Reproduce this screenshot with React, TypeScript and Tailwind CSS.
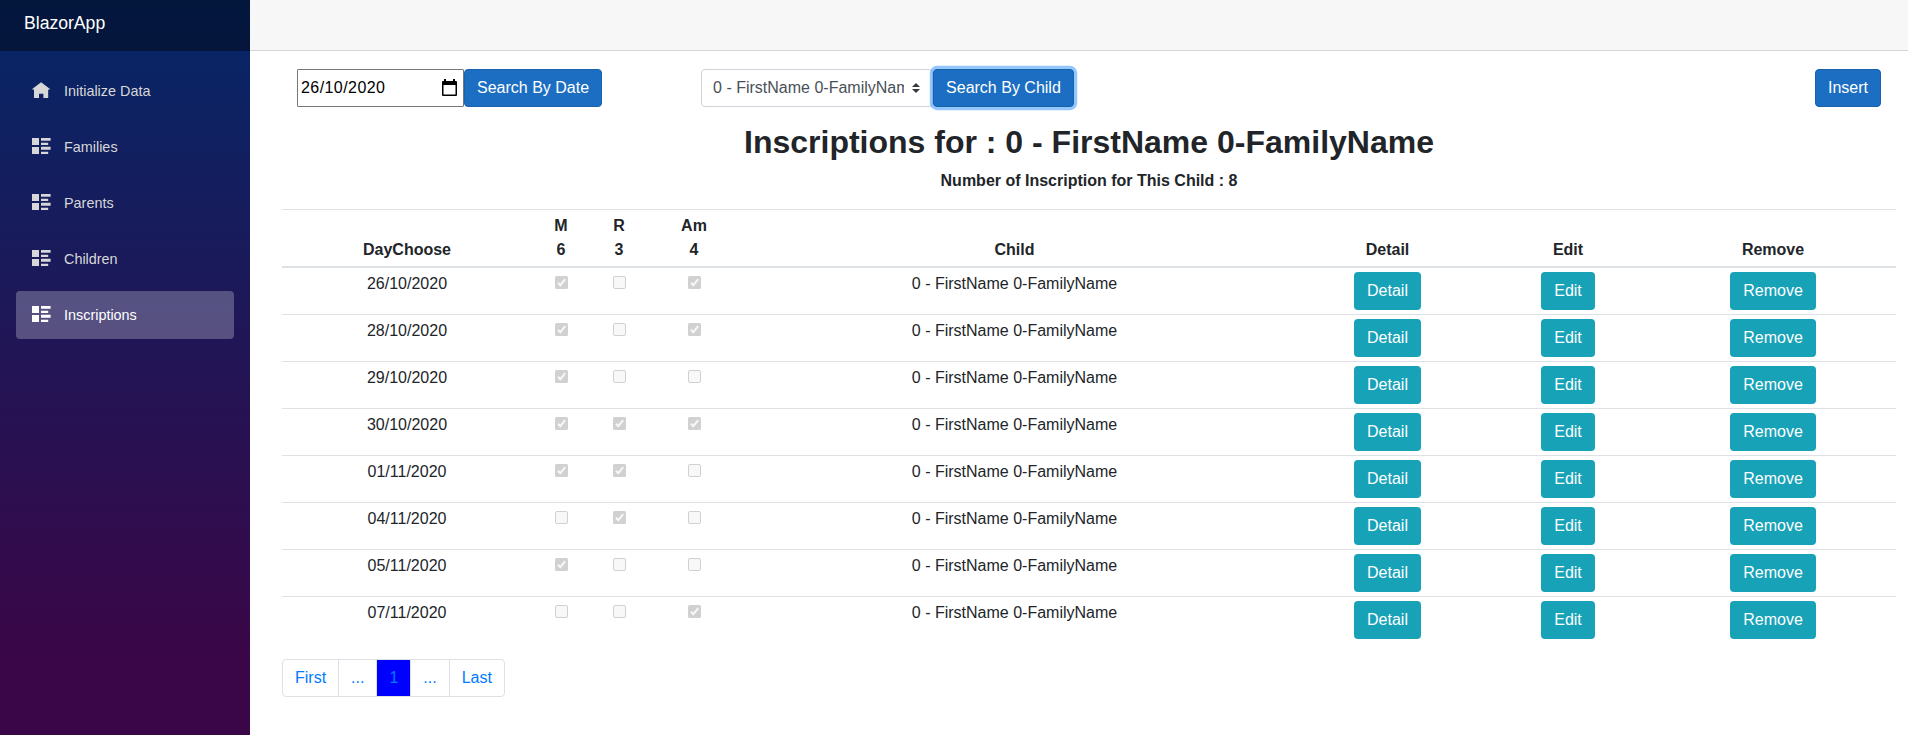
import React from 'react';

const LIST = 'M0 0h7v7H0zM9 0h9.6v2.7H9zM9 4.7h7.2V7H9zM0 9h7v7H0zM9 8.8h9.6v2.9H9zM9 13.7h7.2V16H9z';
const HOME = 'M9.1 0.2L0.2 7v0.4H2V16h5v-4.3h4.4V16h4.8V7.4H18V7z';

const navItems = [
  { label: 'Initialize Data', path: HOME, active: false },
  { label: 'Families', path: LIST, active: false },
  { label: 'Parents', path: LIST, active: false },
  { label: 'Children', path: LIST, active: false },
  { label: 'Inscriptions', path: LIST, active: true },
];

const rows: [string, boolean, boolean, boolean][] = [
  ['26/10/2020', true, false, true],
  ['28/10/2020', true, false, true],
  ['29/10/2020', true, false, false],
  ['30/10/2020', true, true, true],
  ['01/11/2020', true, true, false],
  ['04/11/2020', false, true, false],
  ['05/11/2020', true, false, false],
  ['07/11/2020', false, false, true],
];

function Sidebar() {
  return (
    <aside className="w-[250px] shrink-0 bg-[linear-gradient(180deg,rgb(5,39,103)_0px,#3a0647_656px)]">
      <div className="flex h-[51px] items-center bg-black/40 pb-[5px] pl-6">
        <a className="text-[17.6px] leading-[26px] text-white">BlazorApp</a>
      </div>
      <nav className="flex flex-col gap-2 px-4 pt-4">
        {navItems.map((item) => (
          <a
            key={item.label}
            className={
              item.active
                ? 'flex h-12 items-center rounded bg-white/25 pl-4 text-[14.4px] text-white'
                : 'flex h-12 items-center rounded pl-4 text-[14.4px] text-[#d7d7d7]'
            }
          >
            <svg viewBox="0 0 19 16" className="mr-[13px] mb-[2px] h-4 w-[19px]" fill="currentColor">
              <path d={item.path} />
            </svg>
            <span className="pt-[2px]">{item.label}</span>
          </a>
        ))}
      </nav>
    </aside>
  );
}

function Check({ on }: { on: boolean }) {
  return on ? (
    <svg viewBox="0 0 13 13" className="mx-auto mt-[8px] block size-[13px]">
      <rect width="13" height="13" rx="1.5" fill="#d1d1d1" />
      <path d="M3 6.8L5.3 9.2L10.2 3.2" fill="none" stroke="#f8f8f8" strokeWidth="2" />
    </svg>
  ) : (
    <span className="mx-auto mt-[8px] block size-[13px] rounded-[2px] border border-[#d1d1d1] bg-[#f8f8f8]" />
  );
}

function InfoButton({ children }: { children: React.ReactNode }) {
  return (
    <button className="mt-1 h-[38px] rounded bg-[#17a2b8] px-[13px] leading-6 text-white">{children}</button>
  );
}

const primary = 'h-[38px] rounded border border-[#1861ac] bg-[#1b6ec2] px-3 leading-6 whitespace-nowrap text-white';

function Toolbar() {
  return (
    <div className="flex h-[38px] pr-[27px] pl-[47px]">
      <div className="flex h-[38px] w-[167px] items-center justify-between rounded-[1px] border border-[#767676] pr-[6px] pl-[3px] text-black">
        <span className="tracking-[0.43px]">26/10/2020</span>
        <svg viewBox="0 0 15 17" className="mb-[1px] h-[17px] w-[15px]">
          <path d="M2 0h2v2h7V0h2v2h1a1 1 0 0 1 1 1v13a1 1 0 0 1-1 1H1a1 1 0 0 1-1-1V3a1 1 0 0 1 1-1h1zM1.5 6v9.5h12V6z" fill="#000" fillRule="evenodd" />
        </svg>
      </div>
      <button className={primary}>Search By Date</button>
      <div className="ml-[99px] flex h-[38px] w-[232px] items-center rounded border border-[#ced4da] pl-[11px] text-[#495057]">
        <span className="w-[191px] shrink-0 overflow-hidden whitespace-nowrap">0 - FirstName 0-FamilyName</span>
        <svg viewBox="0 0 4 5" className="ml-[8px] h-[10px] w-2 shrink-0">
          <path fill="#343a40" d="M2 0L0 2h4zm0 5L0 3h4z" />
        </svg>
      </div>
      <button className="h-[38px] rounded border border-[#1861ac] bg-[#1b6ec2] px-3 leading-6 whitespace-nowrap text-white shadow-[0_0_0_3.2px_rgba(38,143,255,0.5)]">
        Search By Child
      </button>
      <button className="ml-auto h-[38px] rounded border border-[#1861ac] bg-[#1b6ec2] px-3 leading-6 text-white">Insert</button>
    </div>
  );
}

function Inscriptions() {
  const th = 'h-[59px] border-t border-b-2 border-[#dee2e6] pb-[4px] align-bottom font-bold leading-6';
  return (
    <table className="w-[1614px] table-fixed border-separate border-spacing-0 text-center">
      <colgroup>
        <col className="w-[250px]" />
        <col className="w-[58px]" />
        <col className="w-[58px]" />
        <col className="w-[92px]" />
        <col className="w-[549px]" />
        <col className="w-[197px]" />
        <col className="w-[164px]" />
        <col className="w-[246px]" />
      </colgroup>
      <thead>
        <tr>
          <th className={th}>DayChoose</th>
          <th className={th}>M<br />6</th>
          <th className={th}>R<br />3</th>
          <th className={th}>Am<br />4</th>
          <th className={th}>Child</th>
          <th className={th}>Detail</th>
          <th className={th}>Edit</th>
          <th className={th}>Remove</th>
        </tr>
      </thead>
      <tbody className="[&_td]:h-[47px] [&_td]:border-b [&_td]:border-[#dee2e6] [&_td]:p-0 [&_td]:align-top [&_tr:last-child_td]:border-b-0">
        {rows.map(([day, m, r, am]) => (
          <tr key={day}>
            <td><div className="pt-1 leading-6">{day}</div></td>
            <td><Check on={m} /></td>
            <td><Check on={r} /></td>
            <td><Check on={am} /></td>
            <td><div className="pt-1 leading-6">0 - FirstName 0-FamilyName</div></td>
            <td><InfoButton>Detail</InfoButton></td>
            <td><InfoButton>Edit</InfoButton></td>
            <td><InfoButton>Remove</InfoButton></td>
          </tr>
        ))}
      </tbody>
    </table>
  );
}

function Pagination() {
  const link = 'flex items-center border-r border-[#dee2e6] px-3';
  return (
    <div className="mt-[15px] flex h-[38px] w-fit rounded border border-[#dee2e6] text-[#007bff]">
      <a className={link}>First</a>
      <a className={link}>...</a>
      <a className="flex items-center border-r border-[#dee2e6] bg-[#0000ff] px-3">1</a>
      <a className={link}>...</a>
      <a className="flex items-center px-3">Last</a>
    </div>
  );
}

export default function App() {
  return (
    <div className="flex h-[735px] overflow-hidden bg-white font-['Liberation_Sans',Arial,sans-serif] text-base text-[#212529]">
      <Sidebar />
      <main className="min-w-0 flex-1">
        <div className="h-[51px] border-b border-[#d6d5d5] bg-[#f7f7f7]" />
        <div className="pt-[18px]">
          <Toolbar />
          <div className="pl-8">
            <div className="w-[1614px] text-center">
              <h2 className="pt-[16px] text-[32px] leading-[38px] font-bold">Inscriptions for : 0 - FirstName 0-FamilyName</h2>
              <p className="mt-[8px] mb-[16px] leading-6 font-bold">Number of Inscription for This Child : 8</p>
            </div>
            <Inscriptions />
            <Pagination />
          </div>
        </div>
      </main>
    </div>
  );
}
